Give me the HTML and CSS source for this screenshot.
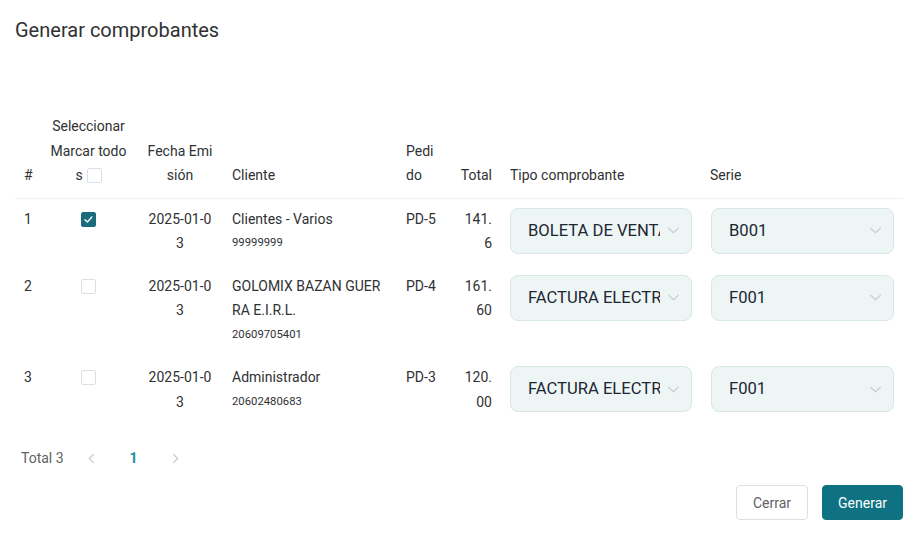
FILE: index.html
```html
<!DOCTYPE html>
<html lang="es">
<head>
<meta charset="utf-8">
<title>Generar comprobantes</title>
<link rel="stylesheet" href="styles.css">
</head>
<body>
<div class="dialog">
  <h1 class="title">Generar comprobantes</h1>
  <table class="grid">
    <colgroup>
      <col class="c-num"><col class="c-sel"><col class="c-date"><col class="c-client">
      <col class="c-ped"><col class="c-total"><col class="c-tipo"><col class="c-serie">
    </colgroup>
    <thead>
      <tr>
        <th>#</th>
        <th class="center">Seleccionar Marcar todos<span class="chk"></span></th>
        <th class="center">Fecha Emisión</th>
        <th>Cliente</th>
        <th>Pedido</th>
        <th class="right">Total</th>
        <th>Tipo comprobante</th>
        <th>Serie</th>
      </tr>
    </thead>
    <tbody>
      <tr>
        <td>1</td>
        <td class="center"><span class="chk on"><svg viewBox="0 0 16 16" width="15" height="15"><polyline points="4.2,8.2 6.8,10.6 11.6,5.4" fill="none" stroke="#fff" stroke-width="1.4" stroke-linecap="round" stroke-linejoin="round"/></svg></span></td>
        <td class="center">2025-01-03</td>
        <td>Clientes - Varios<div class="sub">99999999</div></td>
        <td>PD-5</td>
        <td class="right">141.6</td>
        <td class="sel-cell"><div class="select"><span class="val">BOLETA DE VENTA ELECTRÓNICA</span><svg class="chev" viewBox="0 0 14 8" width="13" height="7"><polyline points="1,1 7,6.5 13,1" fill="none" stroke="#c3c8cf" stroke-width="1.2"/></svg></div></td>
        <td class="sel-cell serie"><div class="select"><span class="val">B001</span><svg class="chev" viewBox="0 0 14 8" width="13" height="7"><polyline points="1,1 7,6.5 13,1" fill="none" stroke="#c3c8cf" stroke-width="1.2"/></svg></div></td>
      </tr>
      <tr>
        <td>2</td>
        <td class="center"><span class="chk"></span></td>
        <td class="center">2025-01-03</td>
        <td>GOLOMIX BAZAN GUERRA E.I.R.L.<div class="sub">20609705401</div></td>
        <td>PD-4</td>
        <td class="right">161.60</td>
        <td class="sel-cell"><div class="select"><span class="val">FACTURA ELECTRÓNICA</span><svg class="chev" viewBox="0 0 14 8" width="13" height="7"><polyline points="1,1 7,6.5 13,1" fill="none" stroke="#c3c8cf" stroke-width="1.2"/></svg></div></td>
        <td class="sel-cell serie"><div class="select"><span class="val">F001</span><svg class="chev" viewBox="0 0 14 8" width="13" height="7"><polyline points="1,1 7,6.5 13,1" fill="none" stroke="#c3c8cf" stroke-width="1.2"/></svg></div></td>
      </tr>
      <tr>
        <td>3</td>
        <td class="center"><span class="chk"></span></td>
        <td class="center">2025-01-03</td>
        <td>Administrador<div class="sub">20602480683</div></td>
        <td>PD-3</td>
        <td class="right">120.00</td>
        <td class="sel-cell"><div class="select"><span class="val">FACTURA ELECTRÓNICA</span><svg class="chev" viewBox="0 0 14 8" width="13" height="7"><polyline points="1,1 7,6.5 13,1" fill="none" stroke="#c3c8cf" stroke-width="1.2"/></svg></div></td>
        <td class="sel-cell serie"><div class="select"><span class="val">F001</span><svg class="chev" viewBox="0 0 14 8" width="13" height="7"><polyline points="1,1 7,6.5 13,1" fill="none" stroke="#c3c8cf" stroke-width="1.2"/></svg></div></td>
      </tr>
    </tbody>
  </table>
  <div class="pager">
    <span class="total">Total 3</span>
    <span class="pbtn"><svg viewBox="0 0 8 12" width="7" height="11"><polyline points="6.5,1 1.5,6 6.5,11" fill="none" stroke="#c0c4cc" stroke-width="1.3"/></svg></span>
    <span class="pbtn num">1</span>
    <span class="pbtn"><svg viewBox="0 0 8 12" width="7" height="11"><polyline points="1.5,1 6.5,6 1.5,11" fill="none" stroke="#c0c4cc" stroke-width="1.3"/></svg></span>
  </div>
  <div class="footer">
    <button class="btn">Cerrar</button>
    <button class="btn primary">Generar</button>
  </div>
</div>
</body>
</html>
```

FILE: styles.css
```css
* { box-sizing: border-box; }
html, body { margin: 0; padding: 0; background: #fff; }
body { font-family: Roboto, "Liberation Sans", Arial, sans-serif; color: #303133; }
.dialog { width: 916px; padding: 15px 13px 0 15px; }
.title { margin: 0; font-size: 20px; font-weight: 400; line-height: 30px; color: #303133; }

.grid { margin-top: 61px; width: 888px; table-layout: fixed; border-collapse: collapse; font-size: 14px; line-height: 1.75; }
.c-num { width: 25px; } .c-sel { width: 97px; } .c-date { width: 86px; } .c-client { width: 174px; }
.c-ped { width: 52px; } .c-total { width: 52px; } .c-tipo { width: 200px; } .c-serie { width: 202px; }

.grid th, .grid td { padding: 8px 9px 10px; word-break: break-all; text-align: left; color: #303133; }
.grid th { font-weight: 400; vertical-align: bottom; }
.grid thead tr { border-bottom: 1px solid #edf2f3; }
.grid td { vertical-align: top; }
.grid .center { text-align: center; }
.grid .right { text-align: right; }
.sub { font-size: 11.3px; line-height: 24.5px; color: #303133; }

.chk { display: inline-block; width: 15px; height: 15px; border: 1px solid #dcdfe6; border-radius: 2px; background: #fff; vertical-align: -3px; margin-left: 4px; position: relative; }
td .chk { margin-left: 0; }
.chk.on { background: #1a6c7c; border-color: #1a6c7c; }
.chk.on svg { position: absolute; left: -1px; top: -1px; }

.grid td.sel-cell { padding-top: 9px; }
.grid td.serie { padding-left: 10px; padding-right: 9px; }
.select { display: flex; align-items: center; height: 46px; width: 100%; background: #eef5f5; border: 1px solid #d9e7e7; border-radius: 8px; padding: 0 11px 0 17px; font-size: 16.6px; color: #1c2733; }
.val { flex: 1; min-width: 0; overflow: hidden; white-space: nowrap; line-height: 20px; }
.chev { flex: none; margin-left: 7px; }

.pager { display: flex; align-items: center; height: 32px; margin-top: 18px; padding-left: 6px; font-size: 14px; }
.total { color: #606266; margin-right: 12px; }
.pbtn { display: flex; align-items: center; justify-content: center; width: 32px; height: 32px; margin-right: 10px; }
.num { color: #1a8d9c; font-weight: 700; }

.footer { display: flex; justify-content: flex-end; gap: 14px; margin-top: 11px; }
.btn { font-family: inherit; font-size: 14px; height: 35px; padding: 0 16px; border: 1px solid #dcdfe6; border-radius: 4px; background: #fff; color: #606266; }
.btn.primary { background: #0f7282; border-color: #0f7282; color: #fff; padding: 0 15px; }
```
